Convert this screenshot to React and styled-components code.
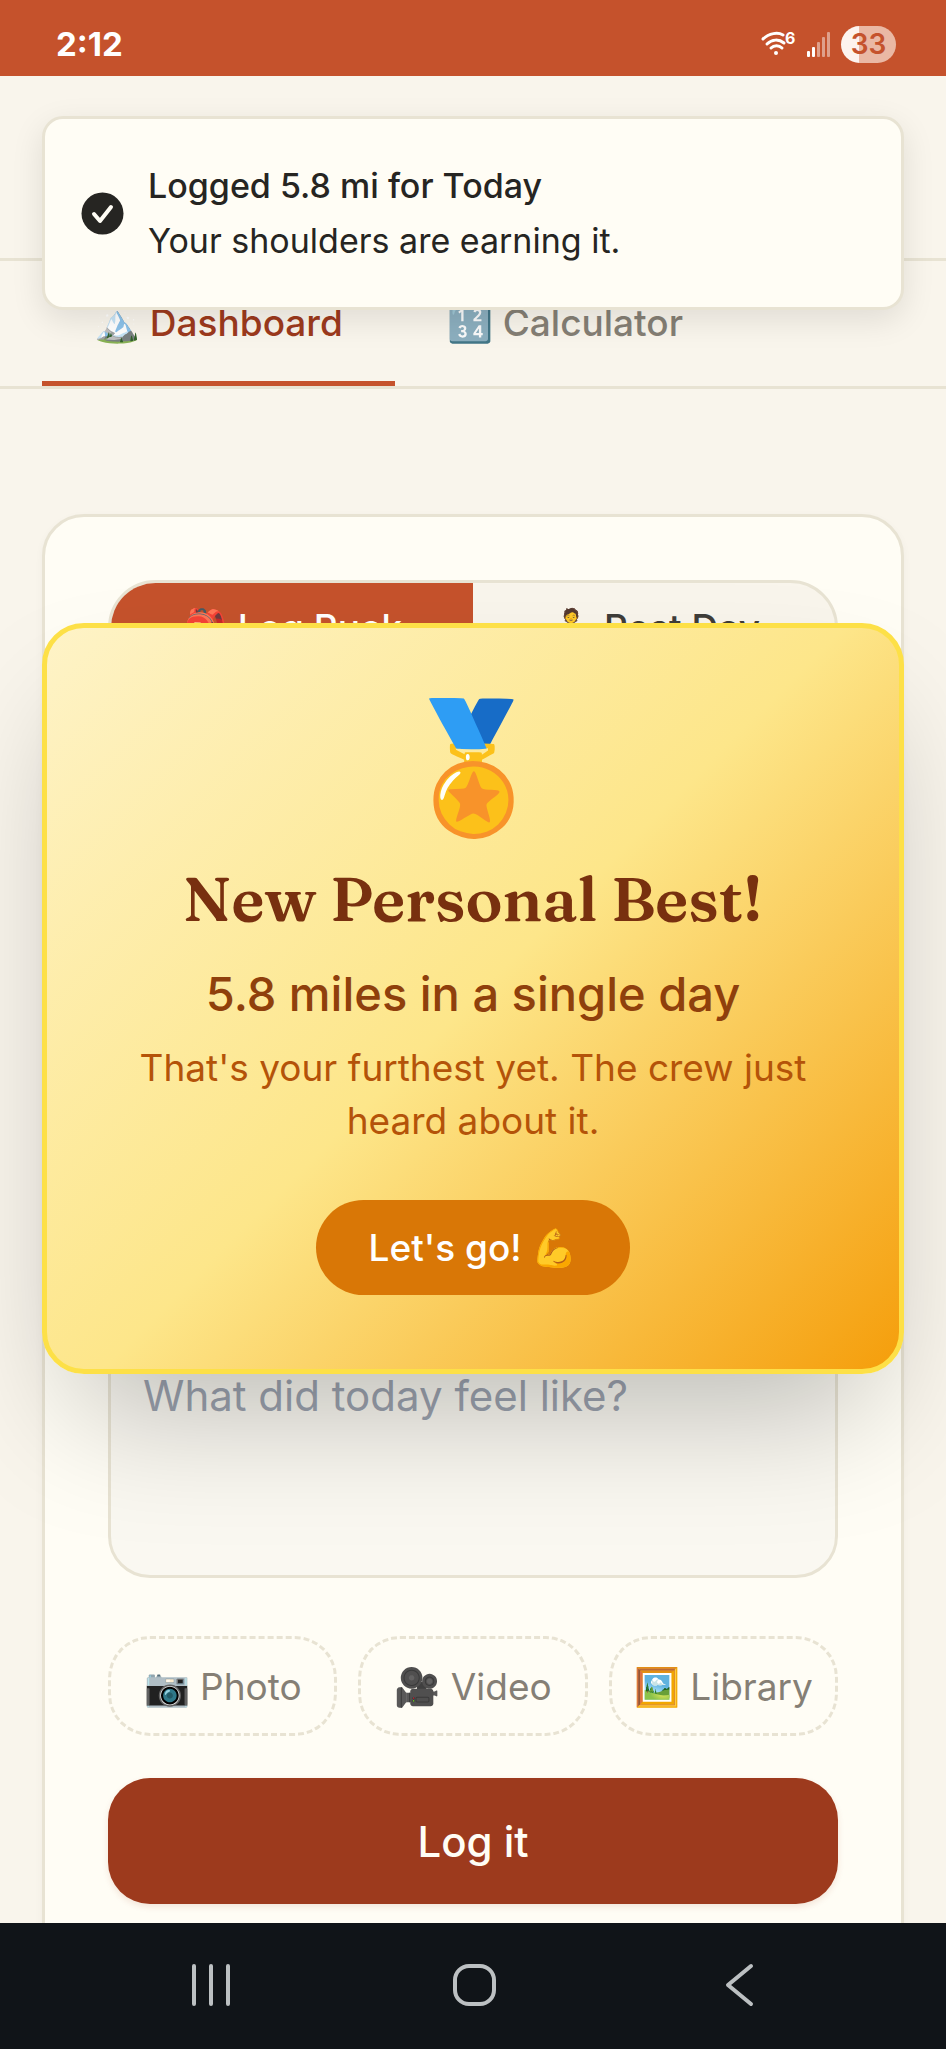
import React from "react";
import styled, { createGlobalStyle } from "styled-components";

const color = {
  page: "#f9f5ec",
  surface: "#fffdf5",
  line: "#e8e3d3",
  rust: "#c5522c",
  rustDark: "#9d3a1d",
  ink: "#262522",
  muted: "#857f75",
};

const GlobalStyle = createGlobalStyle`
  *, *::before, *::after { box-sizing: border-box; }
  body { margin: 0; background: ${color.page}; color: ${color.ink}; font-family: Inter, "Liberation Sans", sans-serif; }
  button, textarea { font: inherit; color: inherit; margin: 0; }
  button { cursor: pointer; border: 0; padding: 0; }
  h2, p { margin: 0; }
`;

const Shell = styled.div`
  display: flex;
  flex-direction: column;
  height: 100vh;
  overflow: hidden;
`;

const StatusBar = styled.div`
  display: flex;
  align-items: center;
  justify-content: space-between;
  flex: none;
  height: 76px;
  padding: 12px 50px 0 56px;
  background: ${color.rust};
  color: #fff;
`;

const Clock = styled.span`
  font-size: 33px;
  line-height: 40px;
  font-weight: 700;
`;

const StatusIcons = styled.div`
  display: flex;
  align-items: center;
  gap: 10px;
`;

const Battery = styled.span`
  display: grid;
  place-items: center;
  width: 55px;
  height: 37px;
  border-radius: 19px;
  background: linear-gradient(90deg, #fdf3ee 33%, #eab8a4 33%);
  color: ${color.rust};
  font-size: 28px;
  line-height: 37px;
  font-weight: 600;
`;

const Viewport = styled.div`
  position: relative;
  flex: 1;
  min-height: 0;
`;

const Scroller = styled.div`
  height: 100%;
  overflow-y: auto;
  scrollbar-width: none;
`;

const Header = styled.header`
  height: 185px;
  border-bottom: 3px solid ${color.line};
`;

const Tabs = styled.nav`
  display: flex;
  height: 128px;
  padding: 0 42px;
  border-bottom: 3px solid ${color.line};
`;

const Tab = styled.a`
  display: flex;
  align-items: center;
  padding: 3px 52px 0;
  border-bottom: 5px solid ${(p) => (p.$active ? color.rust : "transparent")};
  color: ${(p) => (p.$active ? color.rustDark : color.muted)};
  font-size: 37px;
  line-height: 53px;
  font-weight: 500;
  text-decoration: none;
  white-space: pre;
`;

const Content = styled.main`
  padding: 125px 42px 42px;
`;

const Card = styled.section`
  display: flex;
  flex-direction: column;
  padding: 63px;
  border: 3px solid ${color.line};
  border-radius: 42px;
  background: ${color.surface};
  box-shadow: 0 3px 8px rgba(0, 0, 0, 0.04);
`;

const Segmented = styled.div`
  display: flex;
  height: 95px;
  overflow: hidden;
  border: 3px solid ${color.line};
  border-radius: 48px;
  background: ${color.page};
`;

const Segment = styled.button`
  flex: 1;
  background: ${(p) => (p.$active ? color.rust : "transparent")};
  color: ${(p) => (p.$active ? "#fff" : "#3f3d39")};
  font-size: 37px;
  line-height: 53px;
  font-weight: 500;
`;

const Note = styled.textarea`
  height: 249px;
  margin-top: 654px;
  padding: 32px;
  border: 3px solid ${color.line};
  border-radius: 42px;
  background: #faf8f1;
  font-size: 42px;
  line-height: 63px;
  resize: none;
  &::placeholder { color: #9ca3af; opacity: 1; }
`;

const Attachments = styled.div`
  display: grid;
  grid-template-columns: repeat(3, 1fr);
  gap: 21px;
  margin-top: 58px;
`;

const AttachButton = styled.button`
  height: 100px;
  border: 3px dashed ${color.line};
  border-radius: 42px;
  background: transparent;
  color: ${color.muted};
  font-size: 37px;
  line-height: 53px;
  white-space: pre;
`;

const SubmitButton = styled.button`
  height: 126px;
  margin-top: 42px;
  border-radius: 42px;
  background: ${color.rustDark};
  color: ${color.surface};
  font-size: 42px;
  line-height: 63px;
  font-weight: 500;
  box-shadow: 0 3px 6px rgba(156, 57, 28, 0.12);
`;

const Toast = styled.div`
  position: absolute;
  top: 40px;
  left: 42px;
  right: 42px;
  display: flex;
  align-items: center;
  gap: 24px;
  padding: 39px 36px;
  border: 3px solid ${color.line};
  border-radius: 21px;
  background: ${color.surface};
  box-shadow: 0 10px 32px rgba(0, 0, 0, 0.1);
  font-size: 34px;
  line-height: 55px;
`;

const ToastTitle = styled.p`
  font-weight: 500;
`;

const Overlay = styled.div`
  position: absolute;
  inset: 0;
  display: flex;
  align-items: center;
  padding: 0 42px 3px;
`;

const Celebration = styled.div`
  display: flex;
  flex-direction: column;
  align-items: center;
  width: 100%;
  padding: 53px 79px 74px;
  border: 5px solid #fde047;
  border-radius: 42px;
  background: linear-gradient(135deg, #fef3c7 0%, #fde68a 50%, #f59e0b 100%);
  box-shadow: 0 66px 131px -32px rgba(0, 0, 0, 0.25);
  text-align: center;
`;

const Medal = styled.div`
  font-size: 126px;
  line-height: 168px;
`;

const Title = styled.h2`
  margin-top: 10px;
  color: #78300f;
  font-family: Fraunces, "Liberation Serif", serif;
  font-size: 62px;
  line-height: 79px;
  font-weight: 600;
`;

const Achievement = styled.p`
  margin-top: 19px;
  color: #8f400c;
  font-size: 47px;
  line-height: 74px;
  font-weight: 500;
`;

const Blurb = styled.p`
  margin-top: 10px;
  color: #b45309;
  font-size: 37px;
  line-height: 53px;
`;

const CheerButton = styled.button`
  height: 95px;
  margin-top: 53px;
  padding: 0 53px;
  border-radius: 48px;
  background: #d97706;
  color: #fff;
  font-size: 37px;
  line-height: 53px;
  font-weight: 500;
`;

const SystemNav = styled.div`
  display: grid;
  grid-template-columns: repeat(3, 1fr);
  flex: none;
  height: 126px;
  padding: 0 77px 3px 79px;
  background: #101418;
`;

const SystemButton = styled.button`
  display: grid;
  place-items: center;
  background: transparent;
  color: #bcc0c2;
`;

const Stroke = ({ children, ...rest }) => (
  <svg width="48" height="48" viewBox="0 0 48 48" fill="none" stroke="currentColor" strokeWidth="4" strokeLinecap="round" strokeLinejoin="round" aria-hidden="true" {...rest}>
    {children}
  </svg>
);

export default function App() {
  return (
    <Shell>
      <GlobalStyle />
      <StatusBar>
        <Clock>2:12</Clock>
        <StatusIcons>
          <svg width="36" height="36" viewBox="0 -4 36 36" aria-hidden="true">
            <g fill="none" stroke="#fff" strokeWidth="3" strokeLinecap="round">
              <path d="M2 9C8 3 17 2 22 5" />
              <path d="M6 14c5-5 12-5 17-1" />
              <path d="M10 18c3-3 8-3 11 0" />
            </g>
            <circle cx="15" cy="23" r="2" fill="#fff" />
            <text x="24" y="14" fill="#fff" fontFamily="Inter" fontSize="16" fontWeight="700">6</text>
          </svg>
          <svg width="24" height="28" viewBox="0 0 24 28" fill="#fff" aria-hidden="true">
            <rect x="0" y="21" width="3" height="6" rx="1" />
            <rect x="5" y="17" width="3" height="10" rx="1" />
            <g opacity="0.45">
              <rect x="10" y="12" width="3" height="15" rx="1" />
              <rect x="15" y="7" width="3" height="20" rx="1" />
              <rect x="20" y="2" width="3" height="25" rx="1" />
            </g>
          </svg>
          <Battery>33</Battery>
        </StatusIcons>
      </StatusBar>

      <Viewport>
        <Scroller>
          <Header />
          <Tabs>
            <Tab href="#dashboard" $active>🏔️ Dashboard</Tab>
            <Tab href="#calculator">🔢 Calculator</Tab>
          </Tabs>
          <Content>
            <Card>
              <Segmented>
                <Segment $active>🎒 Log Ruck</Segment>
                <Segment>🧘 Rest Day</Segment>
              </Segmented>
              <Note placeholder="What did today feel like?" aria-label="What did today feel like?" />
              <Attachments>
                <AttachButton>📷 Photo</AttachButton>
                <AttachButton>🎥 Video</AttachButton>
                <AttachButton>🖼️ Library</AttachButton>
              </Attachments>
              <SubmitButton>Log it</SubmitButton>
            </Card>
          </Content>
        </Scroller>

        <Overlay>
          <Celebration role="dialog" aria-labelledby="best-title">
            <Medal>🏅</Medal>
            <Title id="best-title">New Personal Best!</Title>
            <Achievement>5.8 miles in a single day</Achievement>
            <Blurb>That's your furthest yet. The crew just heard about it.</Blurb>
            <CheerButton>Let's go! 💪</CheerButton>
          </Celebration>
        </Overlay>

        <Toast role="status">
          <svg width="43" height="43" viewBox="0 0 43 43" aria-hidden="true">
            <circle cx="21.500" cy="21.500" r="21" fill={color.ink} />
            <path d="M13 22l6 7 11-14" fill="none" stroke={color.surface} strokeWidth="4" strokeLinecap="round" strokeLinejoin="round" />
          </svg>
          <div>
            <ToastTitle>Logged 5.8 mi for Today</ToastTitle>
            <p>Your shoulders are earning it.</p>
          </div>
        </Toast>
      </Viewport>

      <SystemNav>
        <SystemButton aria-label="Recent apps">
          <Stroke><path d="M7 5v38M24 5v38M41 5v38" /></Stroke>
        </SystemButton>
        <SystemButton aria-label="Home">
          <Stroke><rect x="5" y="5" width="39" height="38" rx="14" /></Stroke>
        </SystemButton>
        <SystemButton aria-label="Back">
          <Stroke><path d="M38 5L15 24l23 19" /></Stroke>
        </SystemButton>
      </SystemNav>
    </Shell>
  );
}
